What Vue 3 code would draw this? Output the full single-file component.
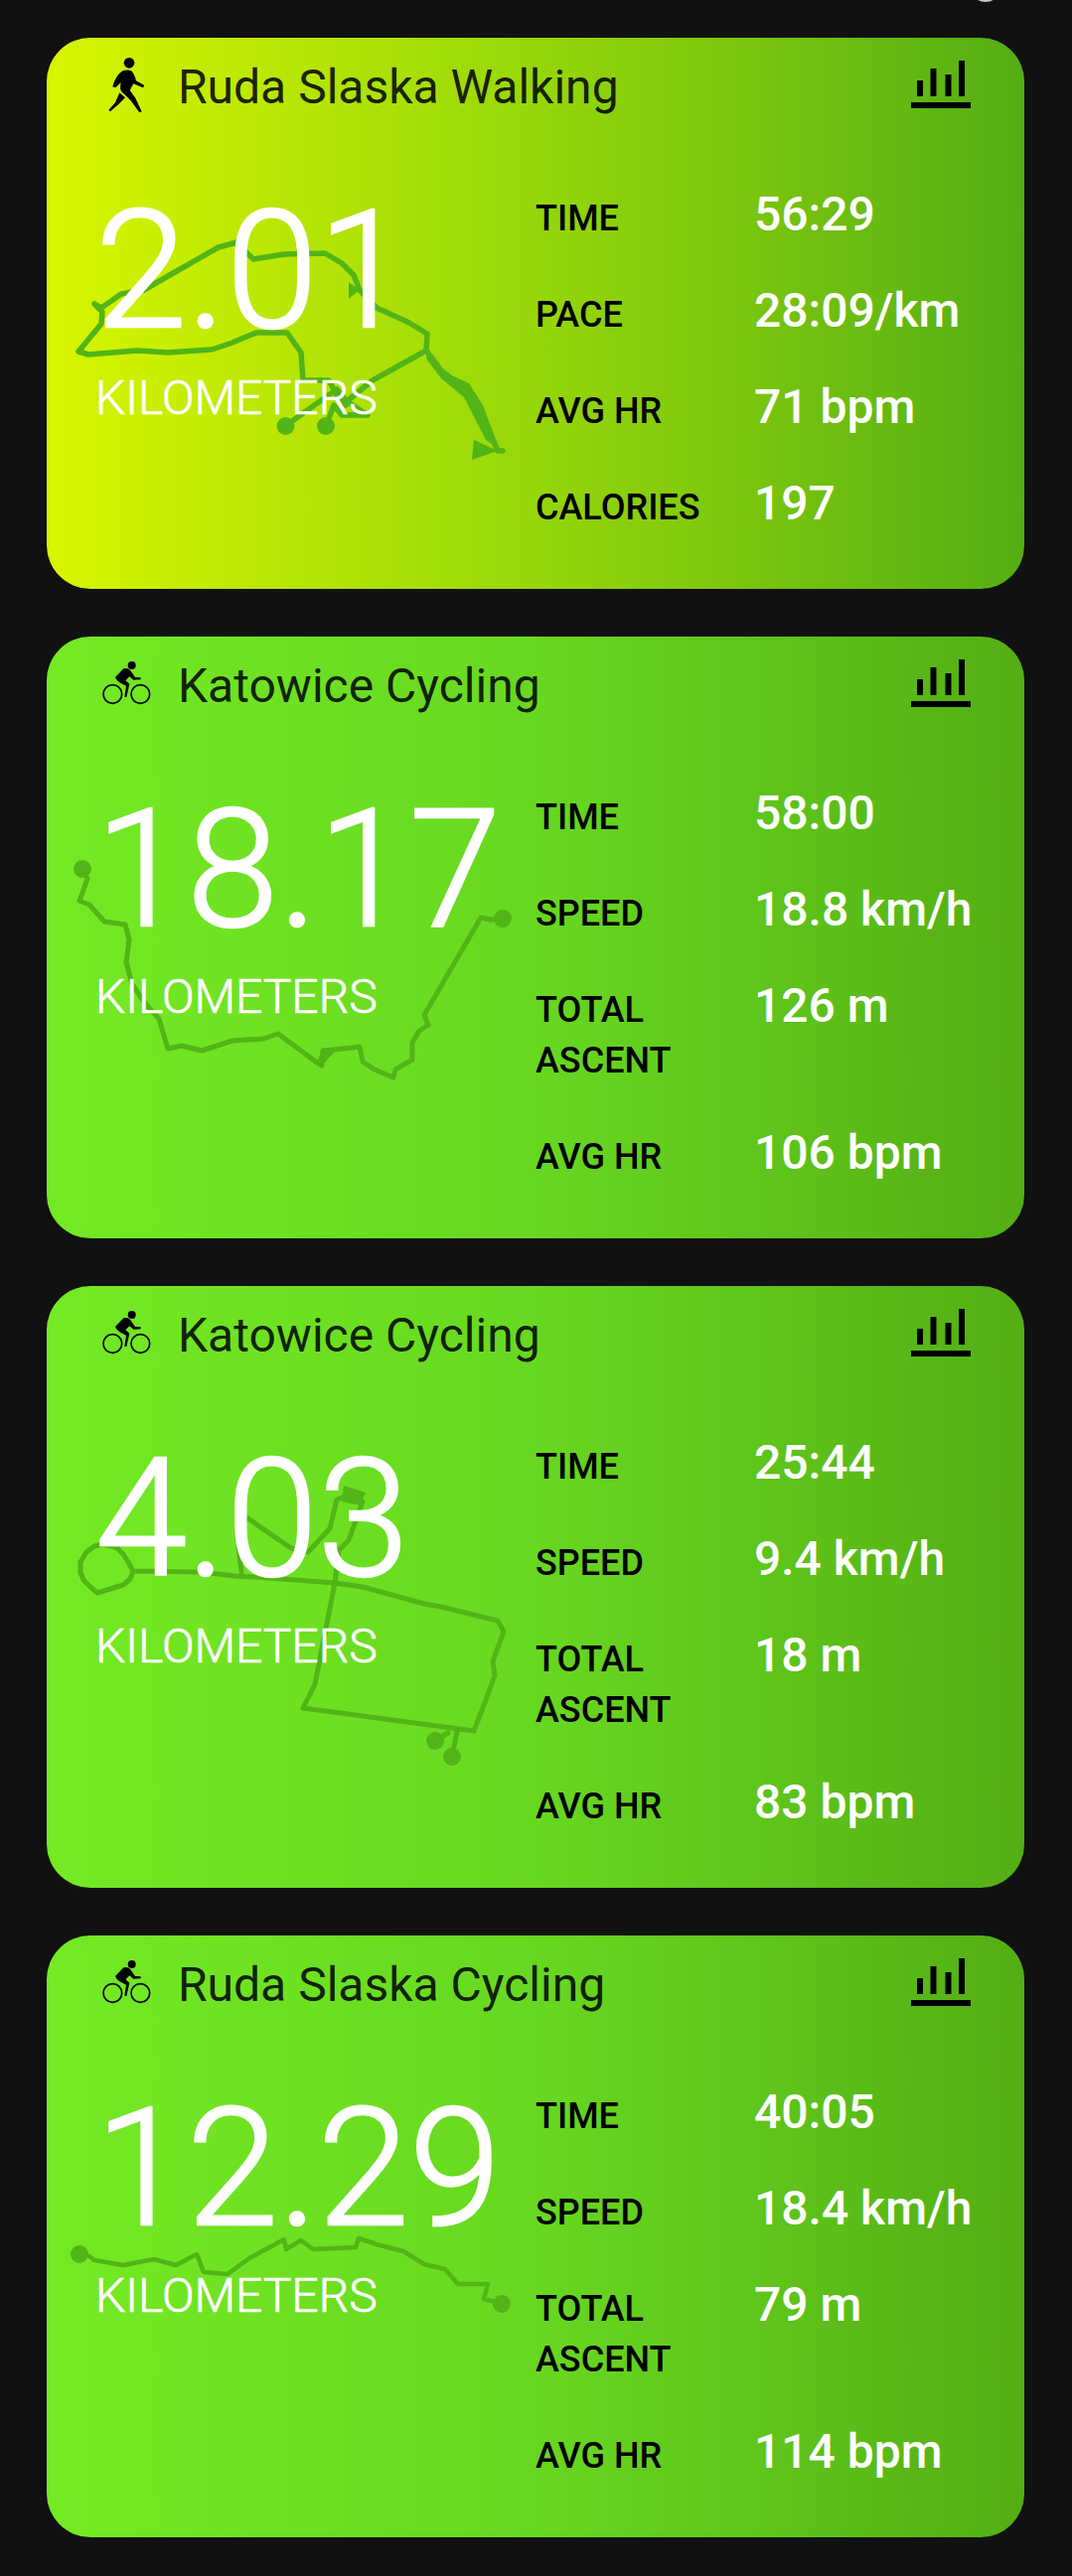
<template>
  <div class="page">
    <span class="status-dot"></span>
    <div
      v-for="activity in activities"
      :key="activity.title + activity.distance"
      class="card"
      :class="{ walking: activity.type === 'walk' }"
    >
      <svg class="route" :viewBox="`0 0 984 ${activity.height}`" aria-hidden="true">
        <polyline v-for="(line, i) in activity.route.lines" :key="i" :points="line" :stroke-width="activity.route.width" />
        <polygon v-for="(blob, i) in activity.route.blobs" :key="'b' + i" :points="blob" />
        <circle v-for="(dot, i) in activity.route.dots" :key="'d' + i" :cx="dot[0]" :cy="dot[1]" r="9" />
      </svg>

      <header class="card-head">
        <svg v-if="activity.type === 'walk'" class="type-icon" viewBox="0 0 180 180">
          <circle cx="99" cy="25" r="16" />
          <path d="M80 49Q95 44 106 49Q113 55 120 79L145 93L141 100L112 88L101 108L117 130L137 172L130 175L104 139L76 112Q70 105 74 84L58 100L49 97Q58 62 80 49Z" />
          <path d="M70 115L87 130L67 150L42 172L37 167L57 145Z" />
        </svg>
        <svg v-else class="type-icon" viewBox="0 0 180 180">
          <circle cx="107" cy="36" r="12" />
          <path d="M57 72L82 46Q95 42 102 50L117 72L134 73L134 79L112 80L100 70L88 82L100 92L91 132L85 131L90 98L70 88Q62 84 57 72Z" />
          <circle class="wheel" cx="49" cy="123" r="28" />
          <circle class="wheel" cx="133" cy="123" r="28" />
        </svg>
        <h2 class="title">{{ activity.title }}</h2>
        <svg class="chart-icon" viewBox="0 0 60 48">
          <rect x="6" y="20" width="6" height="16" />
          <rect x="19.5" y="8" width="6" height="28" />
          <rect x="34.5" y="14" width="6" height="22" />
          <rect x="48" y="0" width="6" height="36" />
          <rect x="0" y="42" width="60" height="6" />
        </svg>
      </header>

      <div class="card-main">
        <div class="distance">
          <div class="distance-value">{{ activity.distance }}</div>
          <div class="distance-unit">KILOMETERS</div>
        </div>
        <dl class="stats">
          <template v-for="stat in activity.stats" :key="stat.label">
            <dt>{{ stat.label }}</dt>
            <dd>{{ stat.value }}</dd>
          </template>
        </dl>
      </div>
    </div>
  </div>
</template>

<script setup>
const activities = [
  {
    type: "walk",
    title: "Ruda Slaska Walking",
    distance: "2.01",
    height: 555,
    stats: [
      { label: "TIME", value: "56:29" },
      { label: "PACE", value: "28:09/km" },
      { label: "AVG HR", value: "71 bpm" },
      { label: "CALORIES", value: "197" },
    ],
    route: {
      width: 5.5,
      dots: [[240.5, 391], [281, 391]],
      lines: [
        "240,391 278,364 292,354 302,366 328,345 382,315 397,335 421,354 435,374 454,416 459,416",
        "281,391 289,370 297,380 323,380 302,366",
        "382,315 383,298 363,286 332,272 315,254 309,239 297,227 280,217 239,218 208,223 191,206 173,211 129,236 98,254 75,258 55,272 48,268 56,276 55,288 32,316 42,319 91,315 122,317 166,314 187,307 211,297 242,297 256,317 258,345 284,345 292,360 301,370",
      ],
      blobs: [
        "383,317 401,337 425,348 439,370 456,415 442,405 420,362 397,343 382,323",
        "428,425 430,405 454,416",
        "304,246 304,263 315,254",
      ],
    },
  },
  {
    type: "ride",
    title: "Katowice Cycling",
    distance: "18.17",
    height: 606,
    stats: [
      { label: "TIME", value: "58:00" },
      { label: "SPEED", value: "18.8 km/h" },
      { label: "TOTAL ASCENT", value: "126 m" },
      { label: "AVG HR", value: "106 bpm" },
    ],
    route: {
      width: 5,
      dots: [[36, 234], [459, 284]],
      lines: [
        "36,234 41,244 36,258 33,266 43,270 58,287 79,290 83,305 80,328 86,350 98,368 113,385 122,415 136,412 156,417 187,407 218,405 233,400 272,429 277,432 278,417 308,414 315,413 318,428 330,436 349,444 351,436 368,426 368,409 375,397 384,391 380,381 437,283 446,285 459,284",
      ],
      blobs: ["272,429 277,432 290,418 278,414"],
    },
  },
  {
    type: "ride",
    title: "Katowice Cycling",
    distance: "4.03",
    height: 606,
    stats: [
      { label: "TIME", value: "25:44" },
      { label: "SPEED", value: "9.4 km/h" },
      { label: "TOTAL ASCENT", value: "18 m" },
      { label: "AVG HR", value: "83 bpm" },
    ],
    route: {
      width: 5,
      dots: [[391, 458], [408, 474]],
      lines: [
        "408,474 413,448",
        "391,458 404,450",
        "258,425 430,448 442,417 451,392 449,378 460,348 454,337 397,323 380,320 318,303 290,299 211,293 189,292 156,288 87,287 82,278 77,270 71,264 65,262 56,260 48,262 40,268 34,278 34,288 37,296 44,303 51,309 64,305 77,301 84,295 87,287",
        "196,288 191,246 201,233 246,264 263,268 285,244 292,215 308,209 318,217 304,256 294,266 290,299 270,401 258,425",
      ],
      blobs: ["299,201 321,208 315,221 297,217"],
    },
  },
  {
    type: "ride",
    title: "Ruda Slaska Cycling",
    distance: "12.29",
    height: 606,
    stats: [
      { label: "TIME", value: "40:05" },
      { label: "SPEED", value: "18.4 km/h" },
      { label: "TOTAL ASCENT", value: "79 m" },
      { label: "AVG HR", value: "114 bpm" },
    ],
    route: {
      width: 4.5,
      dots: [[33, 321], [458, 371]],
      lines: [
        "33,321 43,323 48,327 77,332 108,326 130,332 151,321 158,339 182,341 204,325 239,306 241,316 256,307 268,316 311,314 314,305 332,311 359,318 380,331 401,336 414,351 444,351 440,366 458,371",
      ],
      blobs: [],
    },
  },
];
</script>

<style scoped>
.page {
  position: relative;
  display: flex;
  flex-direction: column;
  gap: 48px;
  width: 1079px;
  box-sizing: border-box;
  padding: 38px 48px 39px 47px;
  font-family: Roboto, "Liberation Sans", sans-serif;
}

.status-dot {
  position: absolute;
  top: -26px;
  left: 977px;
  width: 30px;
  height: 28px;
  border-radius: 50%;
  background: #c9c9c9;
}

.card {
  position: relative;
  box-sizing: border-box;
  padding: 17px 54px 56px 49px;
  border-radius: 44px;
  overflow: hidden;
  background: linear-gradient(90deg, #74ea24, #67d820 50%, #54ae14);
}

.card.walking {
  background: linear-gradient(90deg, #d8f500, #96d70a 50%, #54ae14);
}

.route {
  position: absolute;
  top: 0;
  left: 0;
  width: 100%;
  height: 100%;
}

.route polyline {
  fill: none;
  stroke: #52b416;
  stroke-linejoin: round;
  stroke-linecap: round;
}

.route polygon,
.route circle {
  fill: #52b416;
}

.card-head,
.card-main {
  position: relative;
}

.card-head {
  display: flex;
  align-items: flex-start;
  margin-left: 1px;
}

.type-icon {
  flex: none;
  width: 60px;
  height: 60px;
  fill: #000;
}

.type-icon .wheel {
  fill: none;
  stroke: #000;
  stroke-width: 5;
}

.title {
  flex: 1;
  margin: 3px 0 0 22px;
  font-size: 48px;
  font-weight: 400;
  line-height: 60px;
  color: rgba(0, 0, 0, 0.87);
}

.chart-icon {
  flex: none;
  width: 60px;
  height: 48px;
  margin-top: 6px;
  fill: #000;
}

.card-main {
  display: flex;
  margin-top: 65px;
}

.distance {
  flex: none;
  width: 443px;
  color: #fff;
}

.distance-value {
  font-size: 166px;
  font-weight: 300;
  line-height: 180px;
  -webkit-text-stroke: 2.5px #fff;
}

.distance-unit {
  margin-top: 10px;
  font-size: 48px;
  font-weight: 300;
  line-height: 56px;
  -webkit-text-stroke: 0.7px #fff;
}

.stats {
  flex: 1;
  display: grid;
  grid-template-columns: 220px 1fr;
  align-items: baseline;
  row-gap: 41px;
  margin: 7px 0 0;
}

.stats dt {
  font-size: 36px;
  font-weight: 500;
  line-height: 51px;
  color: #000;
}

.stats dd {
  margin: 0;
  font-size: 48px;
  font-weight: 500;
  line-height: 51px;
  color: #fff;
  white-space: nowrap;
}
</style>

<style>
html,
body {
  background: #111111;
}
</style>
